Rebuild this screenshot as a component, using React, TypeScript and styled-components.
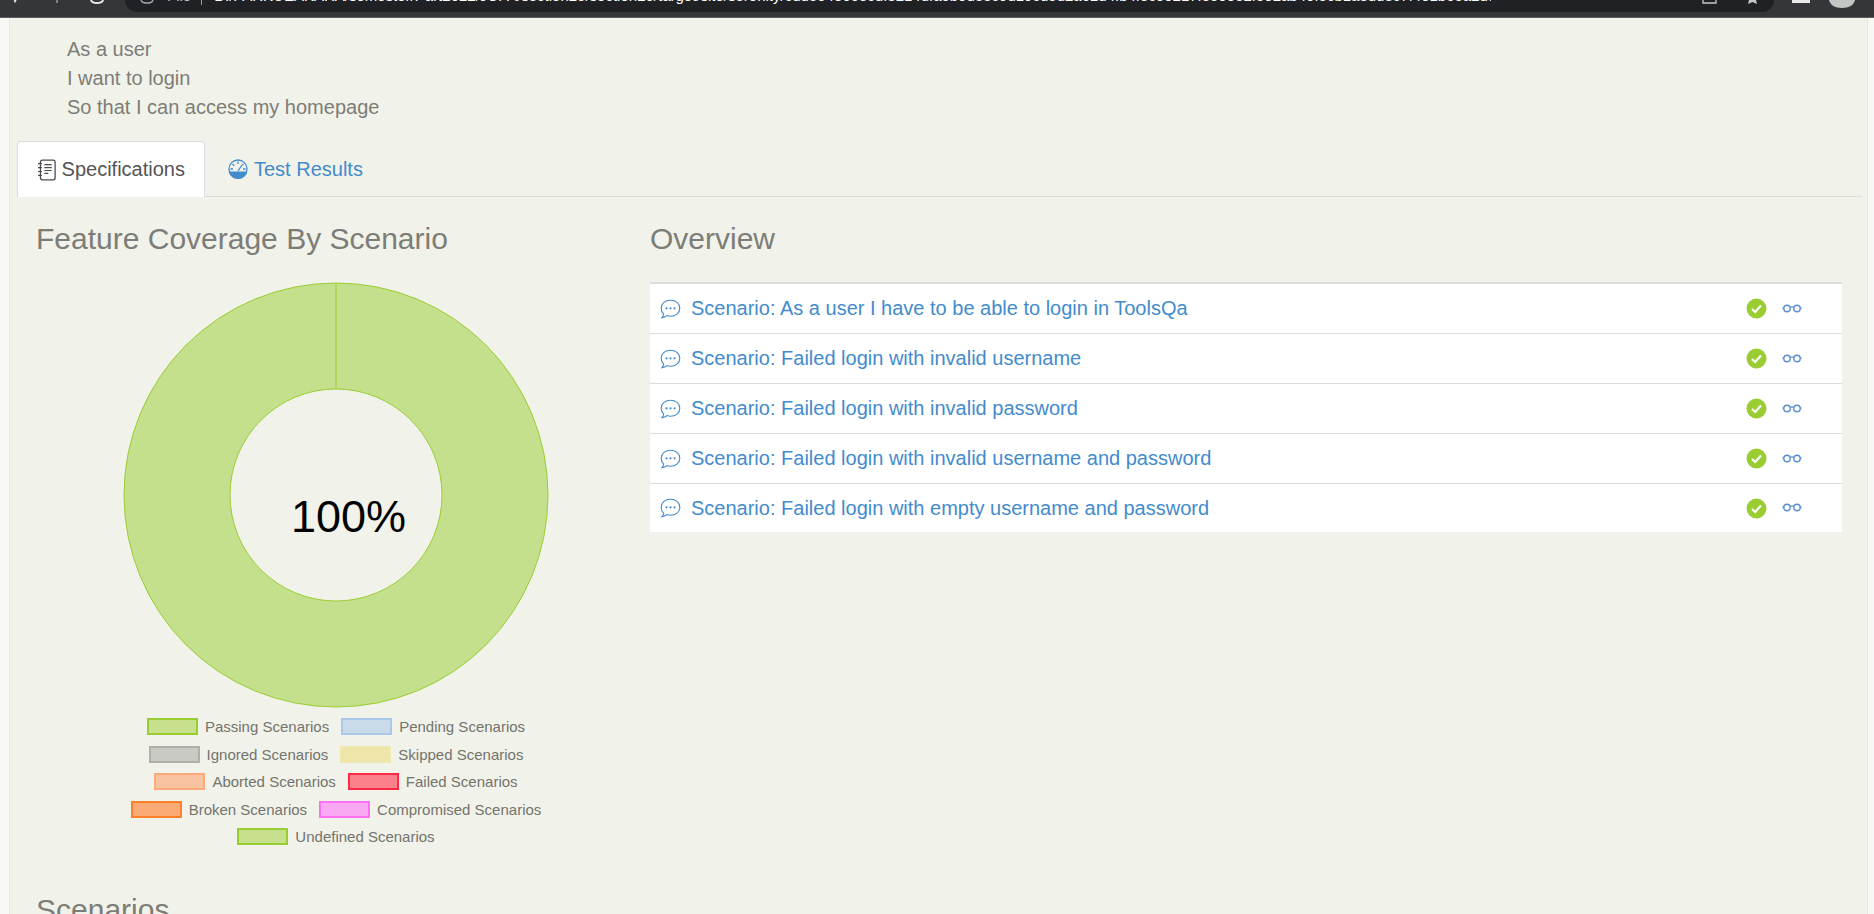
import React from "react";
import styled, { createGlobalStyle } from "styled-components";

const Global = createGlobalStyle`
  html, body { margin: 0; padding: 0; height: 914px; overflow: hidden; background: #f8f9f4; }
  body { font-family: "Liberation Sans", Arial, sans-serif; }
  * { box-sizing: border-box; }
`;

const Page = styled.div`
  width: 1874px;
  height: 914px;
  display: flex;
  flex-direction: column;
  overflow: hidden;
`;

const BrowserBar = styled.div`
  height: 18px;
  flex: none;
  background: #35363a;
  border-bottom: 1px solid #5c5d60;
  display: flex;
  align-items: flex-start;
  overflow: hidden;
`;

const NavIcons = styled.div`
  width: 125px;
  flex: none;
  height: 17px;
  display: flex;
`;

const NavGlyph = styled.svg<{ $ml: number }>`
  margin-left: ${(p) => p.$ml}px;
  flex: none;
`;

const UrlBox = styled.div`
  width: 1649px;
  height: 12px;
  flex: none;
  background: #202124;
  border-radius: 0 0 16px 16px;
  display: flex;
  align-items: flex-start;
  overflow: hidden;
  padding-left: 15px;
`;

const InfoGlyph = styled.svg`
  flex: none;
`;

const FileLabel = styled.span`
  margin: -13px 0 0 13px;
  font-size: 15px;
  line-height: 17px;
  color: #bdc1c6;
  flex: none;
`;

const UrlDivider = styled.span`
  width: 1px;
  height: 5px;
  background: #9aa0a6;
  margin-left: 10px;
  flex: none;
`;

const UrlText = styled.span`
  margin: -13px 0 0 12px;
  width: 1277px;
  flex: none;
  font-size: 15px;
  line-height: 17px;
  color: #fff;
  white-space: nowrap;
  overflow: hidden;
`;

const UrlActions = styled.div`
  margin-left: 211px;
  display: flex;
  gap: 29px;
  flex: none;
`;

const BarRight = styled.div`
  display: flex;
  margin-left: 18px;
  gap: 19px;
  flex: none;
`;

const Sheet = styled.main`
  flex: 1;
  margin-left: 9px;
  width: 1859px;
  background: #f1f2e9;
  border-left: 1px solid #e6e7de;
  border-right: 1px solid #e6e7de;
  padding: 17px 5px 0 7px;
  overflow: hidden;
`;

const Story = styled.div`
  padding-left: 50px;
  font-size: 20px;
  line-height: 29px;
  color: #7d7d78;
`;

const TabBar = styled.div`
  margin-top: 19px;
  height: 56px;
  display: flex;
  border-bottom: 1px solid #dcdcdc;
`;

const Tab = styled.div<{ $active?: boolean }>`
  height: 56px;
  width: ${(p) => (p.$active ? "188px" : "auto")};
  display: flex;
  align-items: center;
  gap: ${(p) => (p.$active ? "5px" : "6px")};
  padding: 0 ${(p) => (p.$active ? "19px" : "23px")};
  font-size: 20px;
  color: ${(p) => (p.$active ? "#555" : "#438bcd")};
  background: ${(p) => (p.$active ? "#fff" : "transparent")};
  border: ${(p) => (p.$active ? "1px solid #dcdcdc" : "none")};
  border-bottom: none;
  border-radius: 4px 4px 0 0;
`;

const Columns = styled.div`
  display: flex;
  gap: 14px;
  padding: 25px 0 0 19px;
`;

const ChartColumn = styled.section`
  width: 600px;
  flex: none;
`;

const OverviewColumn = styled.section`
  width: 1192px;
  flex: none;
`;

const Heading = styled.h2`
  margin: 0;
  font-size: 30px;
  font-weight: 400;
  line-height: 33px;
  color: #7d7d78;
`;

const Donut = styled.svg`
  display: block;
  margin: 27px auto 0;
`;

const Legend = styled.div`
  margin-top: 5px;
  display: flex;
  flex-direction: column;
`;

const LegendRow = styled.div`
  height: 27.5px;
  display: flex;
  justify-content: center;
  align-items: center;
  gap: 12px;
`;

const LegendItem = styled.div`
  display: flex;
  align-items: center;
  gap: 7px;
  font-size: 15px;
  color: #74746e;
`;

const Swatch = styled.span<{ $fill: string; $line: string }>`
  width: 51px;
  height: 17px;
  background: ${(p) => p.$fill};
  border: 2px solid ${(p) => p.$line};
`;

const ScenarioTable = styled.div`
  margin-top: 27px;
  background: #fff;
  border-top: 2px solid #dcdcdc;
`;

const ScenarioRow = styled.div`
  height: 50px;
  display: flex;
  align-items: center;
  padding-left: 10px;
  border-top: 1px solid #dcdcdc;
  &:first-child { border-top: none; height: 49px; }
  &:last-child { height: 49px; }
`;

const ScenarioLink = styled.a`
  margin-left: 10px;
  font-size: 20px;
  color: #438bcd;
  flex: 1;
`;

const ResultIcons = styled.div`
  width: 96px;
  flex: none;
  display: flex;
  align-items: center;
  gap: 15px;
`;

const ScenariosHeading = styled(Heading)`
  margin: 42px 0 0 19px;
`;

const ChatIcon = () => (
  <svg width="21" height="20" viewBox="0 0 21 20" fill="none">
    <path d="M10.5 1.2c5 0 9.3 3 9.3 8s-4.300 8-9.300 8c-1.300 0-2.500-.2-3.600-.6C5.700 17.800 4 18.500 2 18.700c.9-1 1.500-2.200 1.700-3.500C2.100 13.800 1.200 11.700 1.200 9.200c0-5 4.300-8 9.300-8z" stroke="#438bcd" strokeWidth="1.100" />
    <circle cx="6.500" cy="9.300" r="1.100" fill="#438bcd" />
    <circle cx="10.500" cy="9.300" r="1.100" fill="#438bcd" />
    <circle cx="14.500" cy="9.300" r="1.100" fill="#438bcd" />
  </svg>
);

const CheckIcon = () => (
  <svg width="21" height="21" viewBox="0 0 21 21">
    <circle cx="10.500" cy="10.500" r="10" fill="#9acd32" />
    <path d="M6 11l3.200 3L15 7.500" fill="none" stroke="#fff" strokeWidth="2.200" />
  </svg>
);

const GlassesIcon = () => (
  <svg width="20" height="10" viewBox="0 1 20 10" fill="none" stroke="#5b8fd0" strokeWidth="1.400">
    <circle cx="5" cy="5.500" r="3.200" />
    <circle cx="15" cy="5.500" r="3.200" />
    <path d="M8.200 4.500c1-.7 2.600-.7 3.600 0M1.800 4.500 .5 5.500M18.200 4.500l1.300 1" />
  </svg>
);

const SpecIcon = () => (
  <svg width="20" height="22" viewBox="0 0 20 22" fill="none" stroke="#4c4c4c">
    <rect x="3.500" y="1" width="15" height="20" rx="2" strokeWidth="1.300" />
    <path d="M7.500 5.500h7.500M7.500 8.500h7.500M7.500 11.500h7.500M7.500 14.500h4M1 4.500h4M1 8.500h4M1 12.500h4M1 16.500h4" strokeWidth="1.200" />
  </svg>
);

const GaugeIcon = () => (
  <svg width="20" height="20" viewBox="0 0 20 20" fill="none">
    <circle cx="10" cy="10" r="9" stroke="#438bcd" strokeWidth="1.300" />
    <path d="M.8 12.500h18.400C18.600 16.800 14.800 20 10 20S1.400 16.800.8 12.500z" fill="#438bcd" />
    <path d="M10 12l4-6M10 2.500v2.500M4.500 5l1.700 1.700M15.500 5l-1 1M2.500 10H5M15 10h2.500" stroke="#438bcd" strokeWidth="1.300" />
  </svg>
);

const legend = [
  [["Passing Scenarios", "#c6e08d", "#9acd32"], ["Pending Scenarios", "#c9dbe9", "#a9c8ea"]],
  [["Ignored Scenarios", "#cacac5", "#b0b0ab"], ["Skipped Scenarios", "#eee6a9", "#efe8ae"]],
  [["Aborted Scenarios", "#f9c2a0", "#fcaa7c"], ["Failed Scenarios", "#fc808c", "#ff2b46"]],
  [["Broken Scenarios", "#fbaa75", "#ff7f2a"], ["Compromised Scenarios", "#f9a8f4", "#fb70f0"]],
  [["Undefined Scenarios", "#c6e08d", "#9acd32"]],
];

const scenarios = [
  "Scenario: As a user I have to be able to login in ToolsQa",
  "Scenario: Failed login with invalid username",
  "Scenario: Failed login with invalid password",
  "Scenario: Failed login with invalid username and password",
  "Scenario: Failed login with empty username and password",
];

export default function App() {
  return (
    <Page>
      <Global />
      <BrowserBar>
        <NavIcons>
          <NavGlyph $ml={9} width="12" height="4" viewBox="0 0 12 4"><path d="M5.500 0 6 1.500 7 0" stroke="#e8eaed" strokeWidth="1.500" fill="none" /></NavGlyph>
          <NavGlyph $ml={34} width="4" height="4" viewBox="0 0 4 4"><path d="M2 0v3" stroke="#9a9b9e" strokeWidth="1.500" /></NavGlyph>
          <NavGlyph $ml={31} width="14" height="4" viewBox="0 0 14 4"><path d="M1 0c1 4 11 4 12 0" stroke="#e8eaed" strokeWidth="2" fill="none" /></NavGlyph>
        </NavIcons>
        <UrlBox>
          <InfoGlyph width="14" height="4" viewBox="0 0 14 4"><path d="M1 0c1 4 11 4 12 0" stroke="#9aa0a6" strokeWidth="1.600" fill="none" /></InfoGlyph>
          <FileLabel>File</FileLabel>
          <UrlDivider />
          <UrlText>D:/PARKUEAKARA/semester/Part2022/JCPA/section20/section20/target/site/serenity/cdd504e66ecdf3214dfa5b9d5ec9d19cd5d2a62d4fb4fec90217fe59e52f5e2ab40f5cb1a8dd3c7f4e1b60a2d97c.html</UrlText>
          <UrlActions>
            <svg width="15" height="4" viewBox="0 0 15 4"><path d="M1 0v3h13V0" stroke="#c6c7ca" strokeWidth="1.300" fill="none" /></svg>
            <svg width="13" height="4" viewBox="0 0 13 4"><path d="M3 0l-1 4 4.500-2 4.500 2-1-4z" fill="#c6c7ca" /></svg>
          </UrlActions>
        </UrlBox>
        <BarRight>
          <svg width="18" height="4" viewBox="0 0 18 4"><rect width="18" height="3" fill="#e8e8e8" /></svg>
          <svg width="26" height="8" viewBox="0 0 26 8"><path d="M0 0h26c-1 5-6 8-13 8S1 5 0 0z" fill="#c3c4c4" /></svg>
        </BarRight>
      </BrowserBar>
      <Sheet>
        <Story>
          <div>As a user</div>
          <div>I want to login</div>
          <div>So that I can access my homepage</div>
        </Story>
        <TabBar>
          <Tab $active><SpecIcon />Specifications</Tab>
          <Tab><GaugeIcon />Test Results</Tab>
        </TabBar>
        <Columns>
          <ChartColumn>
            <Heading>Feature Coverage By Scenario</Heading>
            <Donut width="426" height="426" viewBox="0 0 426 426">
              <circle cx="213" cy="213" r="159" fill="none" stroke="#c5e08c" strokeWidth="106" />
              <circle cx="213" cy="213" r="212" fill="none" stroke="#9acd32" strokeWidth="1" />
              <circle cx="213" cy="213" r="106" fill="none" stroke="#9acd32" strokeWidth="1" />
              <path d="M213 1v106" stroke="#9acd32" strokeWidth="1" />
              <text x="168" y="250" fontFamily="'Liberation Sans', Arial, sans-serif" fontSize="45" fill="#000">100%</text>
            </Donut>
            <Legend>
              {legend.map((row, i) => (
                <LegendRow key={i}>
                  {row.map(([name, fill, line]) => (
                    <LegendItem key={name}>
                      <Swatch $fill={fill} $line={line} />
                      {name}
                    </LegendItem>
                  ))}
                </LegendRow>
              ))}
            </Legend>
          </ChartColumn>
          <OverviewColumn>
            <Heading>Overview</Heading>
            <ScenarioTable>
              {scenarios.map((s) => (
                <ScenarioRow key={s}>
                  <ChatIcon />
                  <ScenarioLink>{s}</ScenarioLink>
                  <ResultIcons>
                    <CheckIcon />
                    <GlassesIcon />
                  </ResultIcons>
                </ScenarioRow>
              ))}
            </ScenarioTable>
          </OverviewColumn>
        </Columns>
        <ScenariosHeading>Scenarios</ScenariosHeading>
      </Sheet>
    </Page>
  );
}
